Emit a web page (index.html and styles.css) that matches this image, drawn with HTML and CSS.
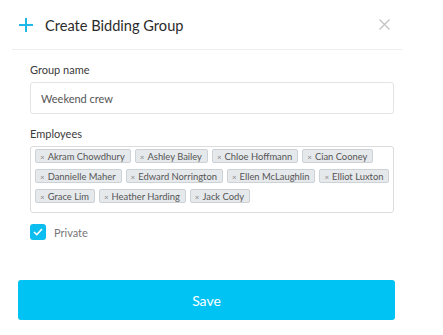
FILE: index.html
```html
<!DOCTYPE html>
<html>
<head>
<meta charset="UTF-8">
<title>Create Bidding Group</title>
<link rel="stylesheet" href="styles.css">
</head>
<body>
	<div class="modal">
		<div class="modal-header">
			<svg class="plus-icon" width="14" height="14" viewBox="0 0 14 14">
				<path d="M7 0V14M0 7H14" stroke="#1fb8e8" stroke-width="2"/>
			</svg>
			<span class="modal-title">Create Bidding Group</span>
			<svg class="close-icon" width="11" height="11" viewBox="0 0 11 11">
				<path d="M0.5 0.5L10.5 10.5M10.5 0.5L0.5 10.5" stroke="#c4c4c4" stroke-width="1.4"/>
			</svg>
		</div>
		<form class="modal-body" onsubmit="return false;">
			<label class="field-label">Group name</label>
			<input class="text-input" type="text" value="Weekend crew">

			<label class="field-label">Employees</label>
			<div class="tag-box">
				<span class="tag"><span class="tag-x">×</span>Akram Chowdhury</span>
				<span class="tag"><span class="tag-x">×</span>Ashley Bailey</span>
				<span class="tag"><span class="tag-x">×</span>Chloe Hoffmann</span>
				<span class="tag"><span class="tag-x">×</span>Cian Cooney</span>
				<span class="tag"><span class="tag-x">×</span>Dannielle Maher</span>
				<span class="tag"><span class="tag-x">×</span>Edward Norrington</span>
				<span class="tag"><span class="tag-x">×</span>Ellen McLaughlin</span>
				<span class="tag"><span class="tag-x">×</span>Elliot Luxton</span>
				<span class="tag"><span class="tag-x">×</span>Grace Lim</span>
				<span class="tag"><span class="tag-x">×</span>Heather Harding</span>
				<span class="tag"><span class="tag-x">×</span>Jack Cody</span>
			</div>

			<div class="check-row">
				<span class="checkbox">
					<svg width="10" height="8" viewBox="0 0 10 8">
						<path d="M1 4L3.8 6.6L9 1" fill="none" stroke="#fff" stroke-width="1.6"/>
					</svg>
				</span>
				<span class="check-label">Private</span>
			</div>
		</form>
		<div class="modal-footer">
			<button class="save-btn" type="button">Save</button>
		</div>
	</div>
</body>
</html>
```

FILE: styles.css
```css
body {
	margin: 0;
	background-color: #fff;
	font-family: Lato, "Liberation Sans", sans-serif;
	color: #333;
}

.modal {
	width: 390px;
	margin-left: 12px;
}

.modal-header {
	display: flex;
	align-items: center;
	height: 50px;
	border-bottom: 1px solid #eeeeee;
	padding-left: 7px;
	box-sizing: border-box;
}

.plus-icon {
	margin-right: 12px;
}

.modal-title {
	flex: 1;
	font-size: 14.6px;
	color: #2b2b2b;
	margin-top: 1px;
}

.close-icon {
	margin-right: 12px;
	margin-top: -1px;
}

.modal-body {
	padding: 13px 8px 0 18px;
}

.field-label {
	display: block;
	font-size: 11px;
	line-height: 14px;
	color: #3a3a3a;
	margin-bottom: 5px;
}

.text-input {
	display: block;
	width: 100%;
	height: 32px;
	box-sizing: border-box;
	border: 1px solid #e3e3e3;
	border-radius: 3px;
	padding: 0 10px;
	font-family: inherit;
	font-size: 11px;
	color: #555;
	margin-bottom: 13px;
	outline: none;
}

.tag-box {
	display: flex;
	flex-wrap: wrap;
	column-gap: 4px;
	row-gap: 6px;
	border: 1px solid #dcdcdc;
	border-radius: 3px;
	padding: 2px 0 9px 4px;
	margin-top: 1px;
}

.tag {
	height: 14px;
	line-height: 13px;
	box-sizing: border-box;
	font-size: 9.4px;
	color: #555;
	background-color: #e6e9ec;
	border: 1px solid #cdd2d6;
	border-radius: 2px;
	padding: 0 5px 0 4px;
	white-space: nowrap;
}

.tag-x {
	font-size: 8px;
	color: #8a8a8a;
	margin-right: 3px;
}

.check-row {
	display: flex;
	align-items: center;
	margin-top: 11px;
}

.checkbox {
	display: flex;
	align-items: center;
	justify-content: center;
	width: 16px;
	height: 16px;
	border-radius: 3px;
	background-color: #0cbef0;
	margin-right: 8px;
}

.check-label {
	font-size: 11px;
	color: #777;
}

.modal-footer {
	padding: 40px 7px 0 6px;
}

.save-btn {
	display: block;
	width: 100%;
	height: 40px;
	border: none;
	border-radius: 3px;
	background-color: #00c3f3;
	color: #fff;
	font-family: inherit;
	font-size: 14px;
	cursor: pointer;
}
```
